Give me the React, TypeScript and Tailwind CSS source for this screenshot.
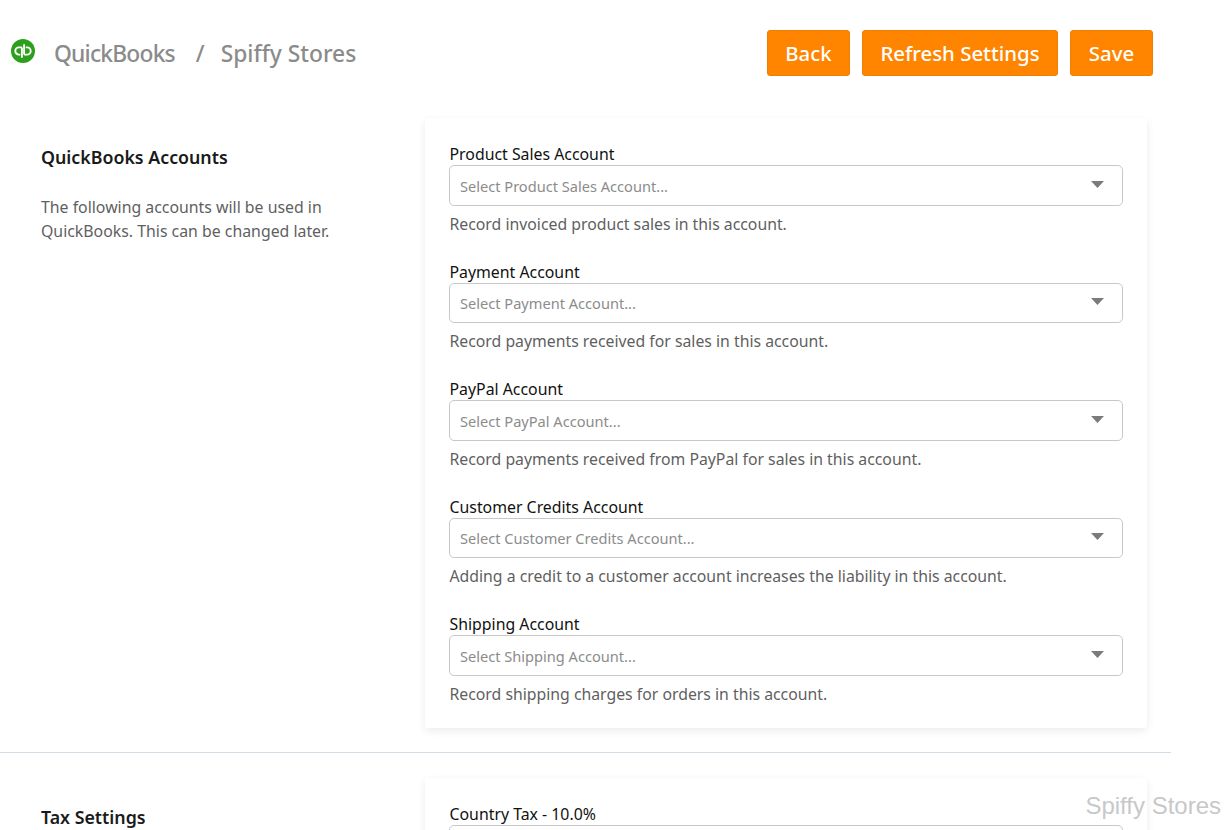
const accounts = [
  { label: 'Product Sales Account', placeholder: 'Select Product Sales Account...', help: 'Record invoiced product sales in this account.' },
  { label: 'Payment Account', placeholder: 'Select Payment Account...', help: 'Record payments received for sales in this account.' },
  { label: 'PayPal Account', placeholder: 'Select PayPal Account...', help: 'Record payments received from PayPal for sales in this account.' },
  { label: 'Customer Credits Account', placeholder: 'Select Customer Credits Account...', help: 'Adding a credit to a customer account increases the liability in this account.' },
  { label: 'Shipping Account', placeholder: 'Select Shipping Account...', help: 'Record shipping charges for orders in this account.' },
];

function SelectBox({ placeholder }: { placeholder: string }) {
  return (
    <div className="-ml-px flex h-[40.5px] items-center justify-between rounded-[5px] border border-[#c8c8c8] bg-white pl-[10.5px] pr-[18px]">
      <span className="pt-[3px] text-[14.6px] text-[#8c8c8c]">{placeholder}</span>
      <svg width="13" height="7" viewBox="0 0 13 7" className="mb-[2px]">
        <path d="M0 0h13L6.5 7z" fill="#7b7b7b" />
      </svg>
    </div>
  );
}

function Field({ label, placeholder, help }: { label: string; placeholder: string; help: string }) {
  return (
    <div className="mb-[24px] last:mb-0">
      <div className="h-[23px] text-[15.85px] leading-[25px] text-[#111]">{label}</div>
      <SelectBox placeholder={placeholder} />
      <div className="mt-[6px] h-[24px] text-[15.8px] leading-[24px] text-[#5f5f5f]">{help}</div>
    </div>
  );
}

function QbLogo() {
  return (
    <svg width="24" height="24" viewBox="0 0 24 24" className="shrink-0">
      <circle cx="12" cy="12" r="12" fill="#2ca01c" />
      <path d="M10.9 8.4H7.9a3.6 3.6 0 0 0 0 7.2h1.3M10.9 8.4V18.8" fill="none" stroke="#fff" strokeWidth="1.9" />
      <path d="M13.1 15.6h3a3.6 3.6 0 0 0 0-7.2h-1.3M13.1 15.6V5.2" fill="none" stroke="#fff" strokeWidth="1.9" />
    </svg>
  );
}

export default function App() {
  return (
    <div className="relative h-[830px] overflow-hidden bg-white font-['Noto_Sans',sans-serif]">
      <div className="w-[1171px]">
        {/* header */}
        <div className="flex items-center justify-between pl-[11px] pr-[18px] pt-[30px]">
          <div className="flex items-center text-[22.8px] font-medium text-[#8b8b8b]">
            <div className="mb-[5px]"><QbLogo /></div>
            <span className="ml-[19px] pt-[2px] tracking-[-0.8px]">QuickBooks</span>
            <span className="ml-[21px] pt-[2px]">/</span>
            <span className="ml-[16px] pt-[2px]">Spiffy Stores</span>
          </div>
          <div className="flex gap-[12px]">
            <button className="h-[46px] w-[83px] rounded-[3px] border border-[#f07f00] bg-[#ff8400] text-[20.4px] font-medium text-white">Back</button>
            <button className="h-[46px] w-[196px] rounded-[3px] border border-[#f07f00] bg-[#ff8400] text-[20.4px] font-medium text-white">Refresh Settings</button>
            <button className="h-[46px] w-[83px] rounded-[3px] border border-[#f07f00] bg-[#ff8400] text-[20.4px] font-medium text-white">Save</button>
          </div>
        </div>

        {/* accounts section */}
        <div className="mt-[42px] flex pb-[24px] pl-[41px]">
          <div className="w-[384px] pt-[26px]">
            <h2 className="text-[17.8px] leading-[27px] font-semibold text-[#1a1a1a]">QuickBooks Accounts</h2>
            <p className="mt-[24px] w-[300px] text-[15.85px] leading-[24px] text-[#5f5f5f]">
              The following accounts will be used in QuickBooks. This can be changed later.
            </p>
          </div>
          <div className="w-[722px] rounded-[3px] bg-white px-[24.5px] pt-[24px] pb-[22px] shadow-[0_3px_8px_rgba(0,0,0,0.08)]">
            {accounts.map((a) => (
              <Field key={a.label} {...a} />
            ))}
          </div>
        </div>

        <div className="h-px bg-[#d3dce4]" />

        {/* tax section */}
        <div className="mt-[25px] flex pl-[41px]">
          <div className="w-[384px] pt-[26px]">
            <h2 className="text-[17.8px] leading-[27px] font-semibold text-[#1a1a1a]">Tax Settings</h2>
          </div>
          <div className="w-[722px] rounded-[3px] bg-white px-[24.5px] pt-[24px] pb-[22px] shadow-[0_3px_8px_rgba(0,0,0,0.08)]">
            <Field label="Country Tax - 10.0%" placeholder="" help="" />
          </div>
        </div>
      </div>

      <div className="absolute right-[6px] bottom-[10px] font-['Liberation_Sans',sans-serif] text-[24px] leading-[28px] text-[#c8c8c8]">
        Spiffy Stores
      </div>
    </div>
  );
}
